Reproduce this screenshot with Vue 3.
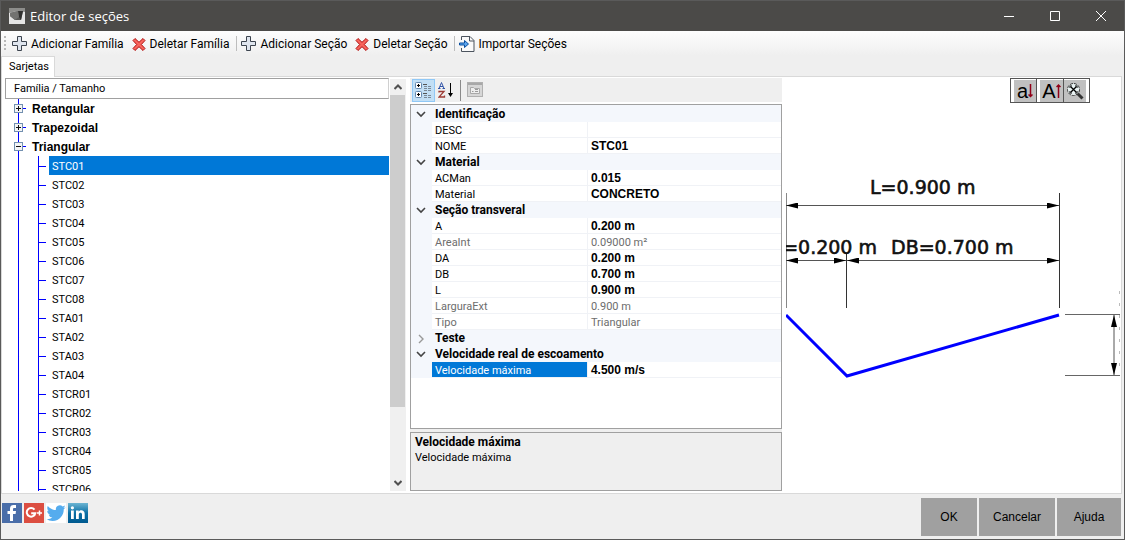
<script setup>
import { ref } from 'vue'

const selected = ref('STC01')
const sections = [
  'STC01', 'STC02', 'STC03', 'STC04', 'STC05', 'STC06', 'STC07', 'STC08',
  'STA01', 'STA02', 'STA03', 'STA04',
  'STCR01', 'STCR02', 'STCR03', 'STCR04', 'STCR05', 'STCR06',
]
const families = [
  { name: 'Retangular', open: false },
  { name: 'Trapezoidal', open: false },
  { name: 'Triangular', open: true },
]
const commands = [
  { icon: 'plus', label: 'Adicionar Família' },
  { icon: 'cross', label: 'Deletar Família' },
  { icon: 'plus', label: 'Adicionar Seção', split: true },
  { icon: 'cross', label: 'Deletar Seção' },
  { icon: 'import', label: 'Importar Seções', split: true },
]
const groups = [
  { name: 'Identificação', open: true, rows: [{ k: 'DESC', v: '' }, { k: 'NOME', v: 'STC01' }] },
  { name: 'Material', open: true, rows: [{ k: 'ACMan', v: '0.015' }, { k: 'Material', v: 'CONCRETO' }] },
  {
    name: 'Seção transveral', open: true, rows: [
      { k: 'A', v: '0.200 m' },
      { k: 'AreaInt', v: '0.09000 m²', locked: true },
      { k: 'DA', v: '0.200 m' },
      { k: 'DB', v: '0.700 m' },
      { k: 'L', v: '0.900 m' },
      { k: 'LarguraExt', v: '0.900 m', locked: true },
      { k: 'Tipo', v: 'Triangular', locked: true },
    ],
  },
  { name: 'Teste', open: false, rows: [] },
  { name: 'Velocidade real de escoamento', open: true, rows: [{ k: 'Velocidade máxima', v: '4.500 m/s', active: true }] },
]
</script>

<template>
  <div class="window">
    <header class="titlebar">
      <svg class="app-icon" viewBox="0 0 16 16" aria-hidden="true">
        <rect width="16" height="16" fill="#e4e4e4" />
        <path d="M0 0h16v4L8 3 0 5z" fill="#8d8d8b" />
        <path d="M1 5l8-2 5 0-2 9-6 0-5-4z" fill="#5a5a58" />
        <path d="M9 3h5l-2 9-2-3z" fill="#30302f" />
        <path d="M1 5l8-2 1 6-4 3-5-4z" fill="#727270" />
      </svg>
      <h1>Editor de seções</h1>
      <div class="win-controls">
        <button type="button" aria-label="Minimizar"><svg viewBox="0 0 10 10"><path d="M0 5.5h10" /></svg></button>
        <button type="button" aria-label="Maximizar"><svg viewBox="0 0 10 10"><path d="M.5.5h9v9h-9z" /></svg></button>
        <button type="button" aria-label="Fechar"><svg viewBox="0 0 10 10"><path d="M0 0l10 10M10 0L0 10" /></svg></button>
      </div>
    </header>

    <div class="toolbar" role="toolbar" aria-label="Comandos">
      <span class="grip"></span>
      <template v-for="c in commands" :key="c.label">
        <span v-if="c.split" class="split"></span>
        <button type="button" class="command">
          <svg viewBox="0 0 16 16" aria-hidden="true">
            <path v-if="c.icon === 'plus'" d="M5.5.5h4v5h5v4h-5v5h-4v-5h-5v-4h5z" fill="#dfe5ee" stroke="#3c444f" />
            <path v-else-if="c.icon === 'cross'" d="M4 2.5l4 3.8 4-3.8 2 2L10.300 8.500l3.700 4-2 2L8 10.700l-4 3.800-2-2 3.700-4L2 4.500z" fill="#f8645c" stroke="#b01010" />
            <template v-else>
              <path d="M2.500 4V.500h8.500l4 4v11H2.500V12" fill="#fafafa" stroke="#4c545e" />
              <path d="M10.500.500v4.500h4.500" fill="none" stroke="#4c545e" />
              <path d="M.5 7h5V4.500l4 3.500-4 3.500V9h-5z" fill="#5aa5ee" stroke="#0b4f9f" />
            </template>
          </svg>
          <span>{{ c.label }}</span>
        </button>
      </template>
    </div>

    <div class="tabs" role="tablist">
      <button type="button" class="tab" role="tab" aria-selected="true">Sarjetas</button>
    </div>

    <main class="panel">
      <section class="browser">
        <div class="tree-side">
          <div class="tree-head">Família / Tamanho</div>
          <ul class="tree">
            <li v-for="f in families" :key="f.name">
              <button type="button" class="family" :aria-expanded="f.open">
                <svg viewBox="0 0 9 9" aria-hidden="true">
                  <rect x=".5" y=".5" width="8" height="8" fill="#f4f5f6" stroke="#7390b0" />
                  <path :d="f.open ? 'M2 4.500h5' : 'M2 4.500h5M4.500 2v5'" stroke="#111" />
                </svg>
                <i></i>
                <b>{{ f.name }}</b>
              </button>
              <ul v-if="f.open" class="children">
                <li v-for="s in sections" :key="s">
                  <button type="button" class="leaf" :class="{ chosen: s === selected }" @click="selected = s">
                    <i></i><span>{{ s }}</span>
                  </button>
                </li>
              </ul>
            </li>
          </ul>
        </div>
        <div class="scrollbar">
          <button type="button" aria-label="Rolar para cima"><svg viewBox="0 0 8 6"><path d="M.5 5L4 1.500 7.500 5" /></svg></button>
          <div class="track"><div class="thumb"></div></div>
          <button type="button" aria-label="Rolar para baixo"><svg viewBox="0 0 8 6"><path d="M.5 1L4 4.500 7.500 1" /></svg></button>
        </div>
      </section>

      <section class="props">
        <div class="prop-tools">
          <button type="button" class="on" aria-label="Por categoria">
            <svg width="17" height="17" viewBox="0 0 17 17">
              <g fill="#fff" stroke="#6487ad"><rect x=".5" y=".5" width="6" height="6" rx="1" /><rect x=".5" y="9.500" width="6" height="6" rx="1" /></g>
              <path d="M2 3.500h3M3.500 2v3M2 12.500h3M3.500 11v3" stroke="#000" />
              <path d="M8 2.500h4M8 11.500h4" stroke="#555" />
              <path d="M9 4.500h3M13 4.500h3M9 6.500h3M13 6.500h3M9 8.500h3M13 8.500h3M9 13.500h3M13 13.500h3M9 15.500h3M13 15.500h3" stroke="#7c8996" />
            </svg>
          </button>
          <button type="button" aria-label="Alfabética">
            <svg width="16" height="16" viewBox="0 0 16 16">
              <path d="M1 6.500L3.500 .500 6 6.500M2 4.500h3M0 6.500h2.500M4.500 6.500H7" fill="none" stroke="#3355a8" />
              <path d="M1 10.500V9.500h5L1 15h5.500v-1.500" fill="none" stroke="#9c3b35" stroke-width="1.300" />
              <path d="M12.500 1v11" stroke="#000" /><path d="M10 11h5l-2.500 4z" />
            </svg>
          </button>
          <span class="bar"></span>
          <button type="button" aria-label="Páginas de propriedades" disabled>
            <svg width="16" height="16" viewBox="0 0 16 16">
              <rect x=".5" y=".5" width="15" height="14" fill="#d6d6d6" stroke="#b0b0b0" /><path d="M1 2h14" stroke="#a8a8a8" stroke-width="2" />
              <path d="M3.500 11.500v-6h3l1 1h5v5z" fill="#eee" stroke="#a8a8a8" /><path d="M5 9.500h1.500M8 9.500h3M8 7.500h3" stroke="#999" />
            </svg>
          </button>
        </div>

        <div class="grid">
          <table>
            <colgroup><col class="c-gutter" /><col class="c-key" /><col /></colgroup>
            <tbody v-for="g in groups" :key="g.name">
              <tr class="group">
                <td>
                  <button type="button" :aria-label="g.name" :aria-expanded="g.open">
                    <svg viewBox="0 0 10 10">
                      <path v-if="g.open" d="M1 2l4 4 4-4" stroke="#444" stroke-width="1.600" />
                      <path v-else d="M3 1l4 4-4 4" stroke="#999" stroke-width="1.400" />
                    </svg>
                  </button>
                </td>
                <th colspan="2" scope="rowgroup">{{ g.name }}</th>
              </tr>
              <tr v-for="r in g.rows" :key="r.k" :class="{ locked: r.locked, active: r.active }">
                <td class="gutter"></td>
                <th scope="row">{{ r.k }}</th>
                <td class="value">{{ r.v }}</td>
              </tr>
            </tbody>
          </table>
        </div>

        <div class="help">
          <b>Velocidade máxima</b>
          <p>Velocidade máxima</p>
        </div>
      </section>

      <section class="canvas">
        <svg class="drawing" role="img" aria-label="Seção triangular">
          <defs>
            <marker id="arrow" markerWidth="12" markerHeight="6" refX="12" refY="3" orient="auto-start-reverse" markerUnits="userSpaceOnUse">
              <path d="M0 0l12 3-12 3z" fill="#000" />
            </marker>
          </defs>
          <g stroke="#333" fill="none">
            <path d="M.5 115v115" stroke="#888" />
            <path d="M273.500 115v115M60.500 176v54" />
            <path d="M279 236.500h55M279 297.500h55" stroke="#666" />
            <path d="M333.500 213v84" stroke="#bbb" stroke-dasharray="3 9" />
            <g marker-start="url(#arrow)" marker-end="url(#arrow)" stroke="#555">
              <path d="M0 127.500h273" />
              <path d="M0 182.500h60" />
              <path d="M61 182.500h212" />
              <path d="M328 237v60" />
            </g>
          </g>
          <path d="M0 237l61 61 212-61" fill="none" stroke="#00f" stroke-width="3" />
          <g class="dims">
            <text x="84" y="116">L=0.900 m</text>
            <text x="91" y="176" text-anchor="end">=0.200 m</text>
            <text x="105" y="176">DB=0.700 m</text>
          </g>
        </svg>
        <div class="view-tools">
          <button type="button" aria-label="Diminuir texto">
            <span>a</span><svg class="shift" viewBox="0 0 5 16"><path d="M2.500 1v12M.5 11.500l2 2 2-2" /></svg>
          </button>
          <button type="button" aria-label="Aumentar texto">
            <span>A</span><svg class="shift" viewBox="0 0 5 16"><path d="M2.500 15V2M.5 4l2-2 2 2" /></svg>
          </button>
          <button type="button" aria-label="Ajustar zoom">
            <svg class="lens" viewBox="0 0 18 18">
              <path d="M11.500 11.500l5 5" stroke="#333" stroke-width="3" />
              <circle cx="7.500" cy="7.500" r="6" fill="#eaf3f3" stroke="#333" stroke-dasharray="3 1" />
              <path d="M5 5l5 5M10 5l-5 5" stroke="#000" stroke-width="1.300" />
              <path d="M4 6V4h2M9 4h2v2M11 9v2H9M6 11H4V9" stroke="#000" fill="none" />
            </svg>
          </button>
        </div>
      </section>
    </main>

    <footer class="footer">
      <nav class="social" aria-label="Redes sociais">
        <a href="#" aria-label="Facebook"><svg viewBox="0 0 20 20">
          <rect width="20" height="20" fill="#4a6ea9" />
          <path d="M8 18v-7H5.500V8H8V5.500C8 3 9.500 2 11.500 2H14v3h-1.500C11.400 5 11 5.400 11 6.300V8h3l-.4 3H11v7z" fill="#fff" />
        </svg></a>
        <a href="#" aria-label="Google+"><svg viewBox="0 0 20 20">
          <rect width="20" height="20" fill="#dc4e41" />
          <path d="M10.500 6.700A4.300 4.300 0 1 0 11.300 10.200H7.200" fill="none" stroke="#fff" stroke-width="2" />
          <path d="M13 10h5M15.500 7.500v5" stroke="#fff" stroke-width="1.500" />
        </svg></a>
        <a href="#" aria-label="Twitter"><svg viewBox="0 0 20 20">
          <rect width="20" height="20" fill="#fff" />
          <path transform="translate(.5 .500) scale(.8)" d="M23.950 4.570a10 10 0 0 1-2.820.770 4.960 4.960 0 0 0 2.160-2.720c-.950.560-2 .960-3.120 1.180a4.920 4.920 0 0 0-8.390 4.480C7.690 8.100 4.070 6.130 1.640 3.160a4.820 4.820 0 0 0-.670 2.480c0 1.710.870 3.210 2.190 4.100a4.900 4.900 0 0 1-2.230-.620v.060a4.920 4.920 0 0 0 3.950 4.830 5 5 0 0 1-2.210.080 4.940 4.940 0 0 0 4.600 3.420A9.870 9.870 0 0 1 0 19.540a13.990 13.990 0 0 0 7.550 2.210c9.050 0 14-7.500 14-13.980 0-.210 0-.420-.020-.630a9.940 9.940 0 0 0 2.460-2.550z" fill="#55acee" />
        </svg></a>
        <a href="#" aria-label="LinkedIn"><svg viewBox="0 0 20 20">
          <defs><linearGradient id="li" x2="0" y2="1"><stop stop-color="#6db5d2" /><stop offset=".5" stop-color="#0a6fa5" /><stop offset="1" stop-color="#00598f" /></linearGradient></defs>
          <rect width="20" height="20" fill="url(#li)" />
          <path d="M3 7.500h2.800V16H3zM8 7.500h2.700v1.200c1.500-2.300 6-2 6 2.300v5H14v-4.500c0-2.500-3.200-2.400-3.200 0V16H8z" fill="#fff" />
          <circle cx="4.400" cy="4.800" r="1.600" fill="#fff" />
        </svg></a>
      </nav>
      <div class="actions">
        <button type="button">OK</button>
        <button type="button">Cancelar</button>
        <button type="button">Ajuda</button>
      </div>
    </footer>
  </div>
</template>

<style>
body {
  margin: 0;
}
</style>

<style scoped>
.window {
  box-sizing: border-box;
  height: 100vh;
  display: flex;
  flex-direction: column;
  border: 1px solid #5a5a5a;
  border-top: 0;
  background: #efefef;
  color: #000;
  font: 11px/16px Roboto, "Liberation Sans", sans-serif;
}
button {
  margin: 0;
  padding: 0;
  border: 0;
  background: none;
  color: inherit;
  font: inherit;
}
svg {
  display: block;
  flex: none;
}
ul, p, h1 {
  margin: 0;
  padding: 0;
  list-style: none;
}

.titlebar {
  flex: none;
  height: 31px;
  box-sizing: border-box;
  display: flex;
  align-items: center;
  padding-left: 8px;
  background: #4b4a48;
  border-top: 1px solid #5a5a5a;
  color: #fff;
}
.app-icon {
  width: 16px;
  height: 16px;
}
h1 {
  flex: 1;
  padding-left: 5px;
  font: 13px/18px "Open Sans", sans-serif;
}
.win-controls {
  display: flex;
}
.win-controls button {
  width: 46px;
  height: 30px;
  display: grid;
  place-items: center;
}
.win-controls svg {
  width: 10px;
  height: 10px;
  fill: none;
  stroke: #fff;
  overflow: visible;
}

.toolbar {
  flex: none;
  height: 25px;
  display: flex;
  align-items: center;
  padding-left: 3px;
  background: linear-gradient(#fdfdfd, #efefef);
  font-size: 12px;
}
.grip {
  width: 2px;
  height: 15px;
  margin-right: 6px;
  background: repeating-linear-gradient(#b8b8b8 0 2px, transparent 2px 4px);
}
.command {
  display: flex;
  align-items: center;
  gap: 3px;
  margin-right: 7px;
}
.command svg {
  width: 16px;
  height: 16px;
}
.split {
  width: 1px;
  height: 15px;
  margin-right: 4px;
  background: #bdbdbd;
}

.tabs {
  flex: none;
  height: 20px;
  display: flex;
}
.tab {
  box-sizing: border-box;
  height: 21px;
  padding: 0 5px 0 7px;
  border: 1px solid #d9d9d9;
  border-bottom: 0;
  background: #fff;
  position: relative;
}

.panel {
  flex: 1;
  min-height: 0;
  display: grid;
  grid-template-columns: minmax(0, 401fr) minmax(0, 372fr) minmax(0, 335fr);
  grid-template-rows: minmax(0, 1fr);
  gap: 4px;
  margin-right: 2px;
  padding: 1px 0 2px 3px;
  border: 1px solid #d9d9d9;
  background: #fff;
}

.browser {
  display: flex;
}
.tree-side {
  flex: 1;
  min-width: 0;
  display: flex;
  flex-direction: column;
}
.tree-head {
  flex: none;
  height: 19px;
  padding-left: 8px;
  border: 1px solid #a0a0a0;
  border-right-color: #d0d0d0;
  line-height: 20px;
}
.tree {
  flex: 1;
  min-height: 0;
  overflow: hidden;
  background: linear-gradient(#00f, #00f) 13px 0 / 1px 100% no-repeat;
}
.family, .leaf {
  width: 100%;
  height: 19px;
  display: flex;
  align-items: center;
  text-align: left;
}
.family {
  padding-left: 9px;
  font: 12px/16px "Liberation Sans", sans-serif;
}
.family svg {
  width: 9px;
  height: 9px;
}
.family i {
  width: 3px;
  height: 1px;
  margin-right: 6px;
  background: #00f;
}
.children {
  background: linear-gradient(#00f, #00f) 33px 0 / 1px 100% no-repeat;
}
.leaf {
  padding-left: 34px;
}
.leaf i {
  width: 7px;
  height: 1px;
  margin: 1px 3px 0 0;
  background: #00f;
}
.leaf span {
  flex: 1;
  padding: 2px 0 0 3px;
  line-height: 17px;
}
.chosen span {
  background: #0078d7;
  color: #fff;
}

.scrollbar {
  width: 16px;
  margin: 1px 0 0 1px;
  display: flex;
  flex-direction: column;
  background: #f0f0f0;
}
.scrollbar button {
  height: 16px;
  display: grid;
  place-items: center;
}
.scrollbar svg {
  width: 8px;
  height: 6px;
  fill: none;
  stroke: #505050;
  stroke-width: 2;
}
.track {
  flex: 1;
}
.thumb {
  width: 15px;
  height: 82%;
  background: #cdcdcd;
}

.props {
  display: flex;
  flex-direction: column;
  background: #efefef;
}
.prop-tools {
  flex: none;
  height: 24px;
  padding: 0 2px;
  display: flex;
  align-items: center;
  border-bottom: 2px solid #fff;
}
.prop-tools .on {
  padding: 2px;
  margin-right: 3px;
  border: 1px solid #90c8f6;
  background: #c2dff5;
}
.prop-tools .bar {
  width: 1px;
  height: 21px;
  margin: 0 6px;
  background: #8a8a8a;
}
.grid {
  flex: 1;
  min-height: 0;
  overflow: hidden;
  border: 1px solid #a0a0a0;
  background: #fff;
}
table {
  width: 100%;
  table-layout: fixed;
  border-collapse: collapse;
  border-top: 1px solid #f4f7fc;
}
.c-gutter {
  width: 21px;
}
.c-key {
  width: 42%;
}
td, th {
  height: 13px;
  padding: 2px 0 0;
  border-bottom: 1px solid #f0f2f6;
  font-weight: 400;
  text-align: left;
  line-height: 13px;
  white-space: nowrap;
}
th {
  padding-left: 3px;
}
.group td, .group th, .gutter {
  background: #f4f7fc;
  border-color: #f4f7fc;
}
.group th {
  font-size: 12px;
  font-weight: 700;
}
.group button {
  display: block;
  margin-left: 5px;
}
.group svg {
  width: 10px;
  height: 10px;
  fill: none;
}
.value {
  padding-left: 3px;
  border-left: 1px solid #f0f2f6;
  font: 700 12px/13px "Liberation Sans", sans-serif;
}
.locked th, .locked .value {
  color: #6d6d6d;
}
.locked .value {
  font: inherit;
  line-height: 13px;
}
.active th {
  background: #0078d7;
  color: #fff;
}
.help {
  flex: none;
  box-sizing: border-box;
  height: 59px;
  margin-top: 3px;
  padding: 2px 4px;
  border: 1px solid #a0a0a0;
  line-height: 15px;
}
.help b {
  display: block;
  font-size: 12px;
}

.canvas {
  position: relative;
  min-width: 0;
}
.drawing {
  width: 100%;
  height: 100%;
}
.dims {
  font: 19px "DejaVu Sans", sans-serif;
  fill: #111;
  stroke: #111;
  stroke-width: .6px;
}
.view-tools {
  position: absolute;
  top: 0;
  right: 31px;
  display: flex;
  border: 1px solid #555;
  background: #555;
  gap: 1px;
}
.view-tools button {
  box-sizing: border-box;
  width: 25px;
  height: 23px;
  display: flex;
  align-items: center;
  justify-content: center;
  border: solid #fff;
  border-width: 1px 0 0 3px;
  background: #c0c0c0;
  font: 20px/22px "Liberation Sans", sans-serif;
}
.view-tools button:nth-child(2) {
  width: 26px;
}
.view-tools button:last-child {
  border-width: 1px 3px 0 0;
}
.view-tools .shift {
  width: 5px;
  height: 16px;
  fill: none;
  stroke: #900018;
  stroke-width: 1.5;
}
.view-tools .lens {
  width: 18px;
  height: 18px;
}

.footer {
  flex: none;
  height: 45px;
  display: flex;
  align-items: center;
  justify-content: space-between;
  padding: 0 3px 0 1px;
}
.social {
  display: flex;
  gap: 2px;
  padding-bottom: 7px;
}
.social svg {
  width: 20px;
  height: 20px;
}
.actions {
  display: flex;
  gap: 2px;
}
.actions button {
  height: 38px;
  padding: 0 14px;
  min-width: 56px;
  background: #a0a0a0;
  font: 12px/16px "Liberation Sans", sans-serif;
}
.actions button:last-child {
  min-width: 64px;
}
</style>
